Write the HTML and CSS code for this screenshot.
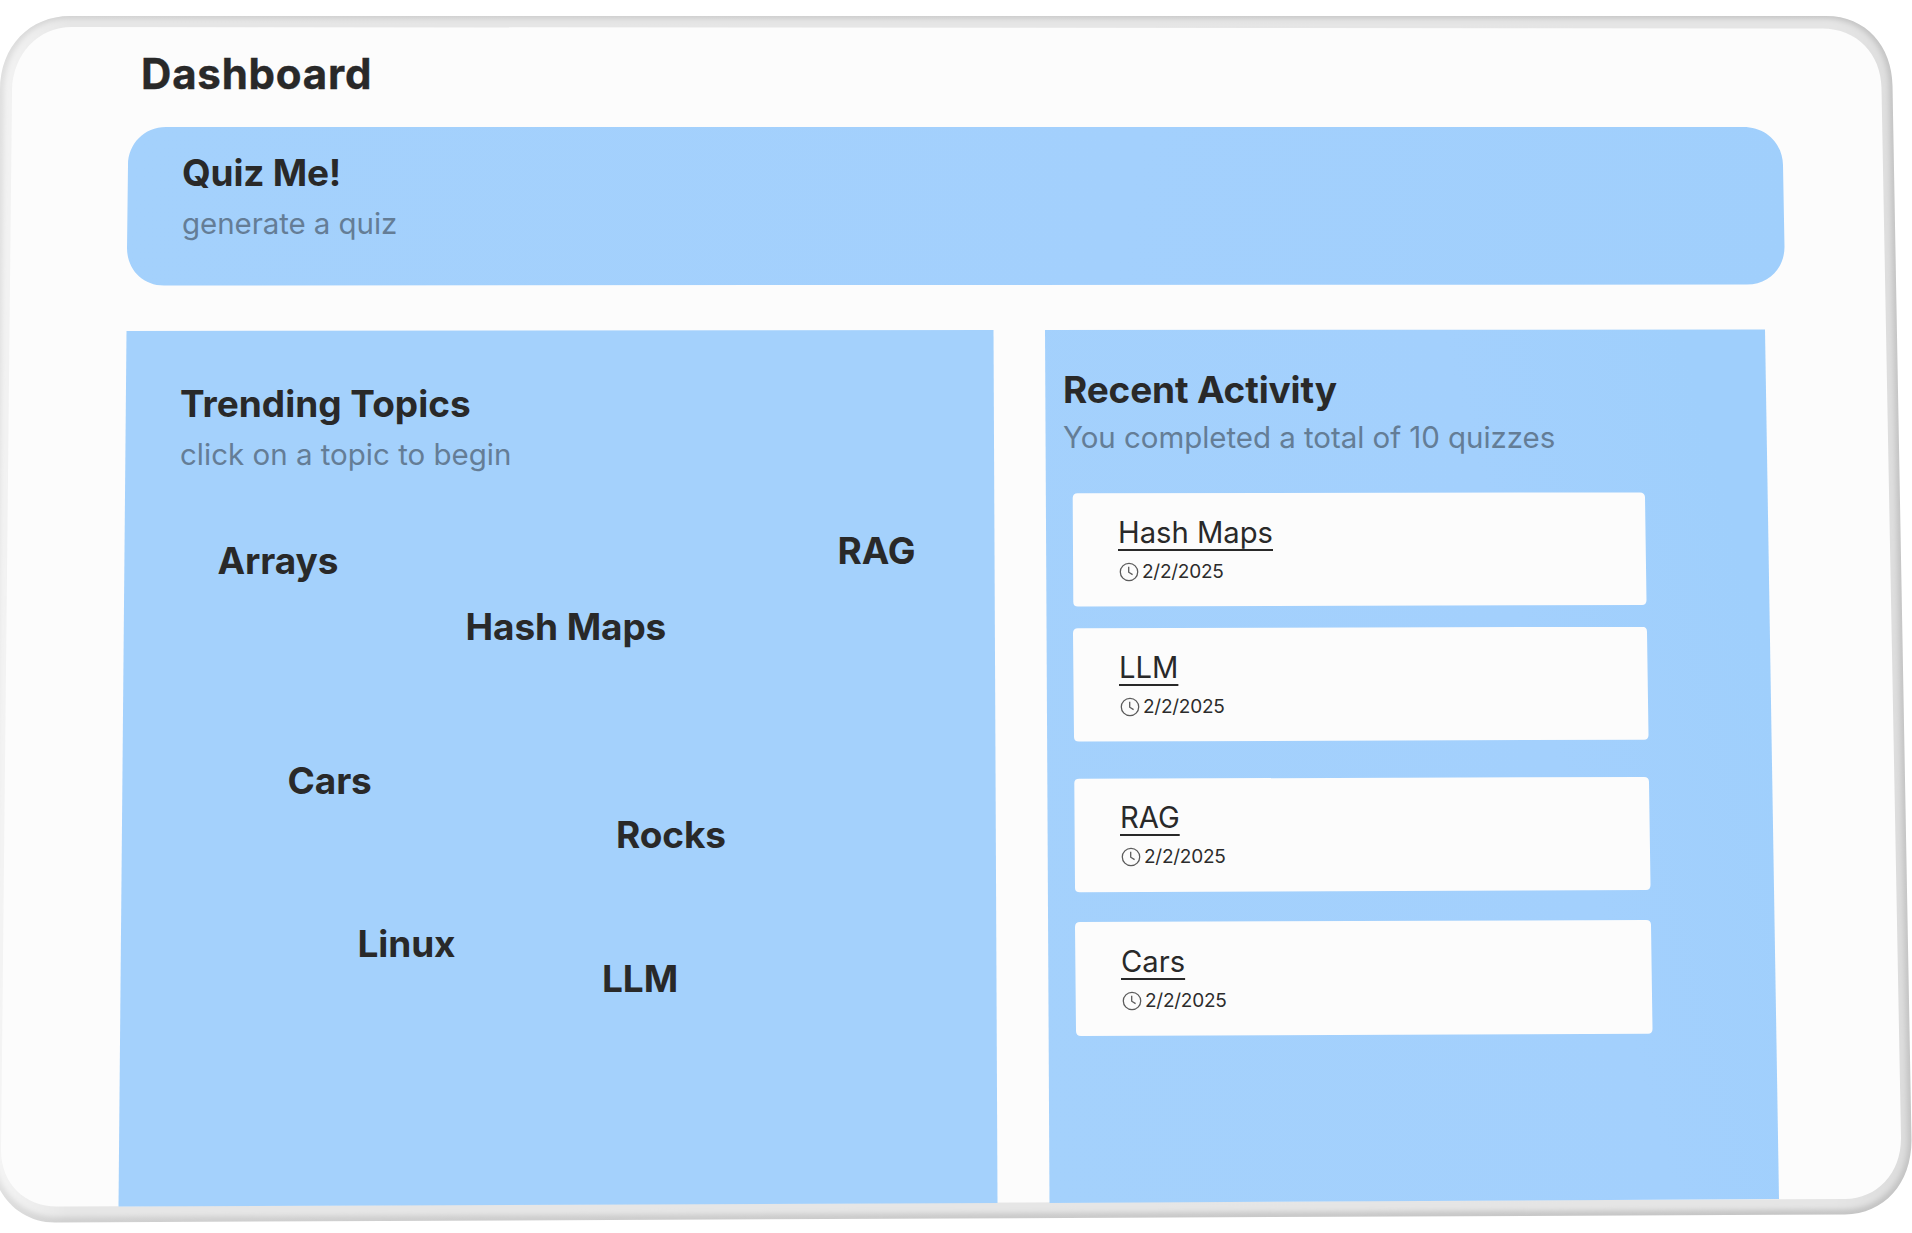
FILE: index.html
```html
<!DOCTYPE html>
<html lang="en">
<head>
<meta charset="utf-8">
<title>Dashboard</title>
<link rel="stylesheet" href="styles.css">
</head>
<body>
<svg class="device" viewBox="0 0 1912 1233" aria-hidden="true">
  <defs>
    <linearGradient id="rim" x1="0" x2="1" y1="0" y2="0">
      <stop offset="0" stop-color="#e2e2e2"/><stop offset=".04" stop-color="#d0d0d0"/><stop offset="1" stop-color="#c4c4c4"/>
    </linearGradient>
    <linearGradient id="bevel" x1="0" x2="1" y1="0" y2="0">
      <stop offset="0" stop-color="#f5f5f5"/><stop offset=".04" stop-color="#e6e6e6"/><stop offset=".96" stop-color="#e5e5e5"/><stop offset="1" stop-color="#dcdcdc"/>
    </linearGradient>
    <clipPath id="body"><path d="M70 16H1826C1866 16 1892 46 1892.500 86L1911.500 1140C1911.500 1184 1884 1214 1845 1214.500L55 1222.500C16 1222.500-10 1190-10 1150L0 90C0 46 30 16 70 16Z"/></clipPath>
    <filter id="soft" x="-2%" y="-2%" width="104%" height="104%"><feGaussianBlur stdDeviation="2.500"/></filter>
  </defs>
  <g clip-path="url(#body)">
    <rect x="-12" width="1926" height="1233" fill="url(#rim)"/>
    <path filter="url(#soft)" fill="url(#bevel)" d="M70 18.500H1824C1863 18.500 1888 47 1888.800 86L1907.800 1140C1907.500 1181 1881 1209 1845 1209.500L55 1217C19 1216-6 1187-6 1150L4 90C5 49 31 18.500 70 18.500Z"/>
  </g>
  <path fill="#fcfcfc" d="M72 27L1822 28.500C1857 28.500 1881 54 1881.500 88L1901 1138C1901 1174 1877 1198.500 1845 1199L57 1206.500C25 1206.500 1 1184 1 1150L12 90C13 54 38 27 72 27Z"/>
</svg>
<main class="screen">
  <h1 class="title">Dashboard</h1>
  <section class="quiz">
    <h2 class="heading">Quiz Me!</h2>
    <p class="hint">generate a quiz</p>
  </section>
  <div class="columns">
    <section class="trending">
      <h2 class="heading">Trending Topics</h2>
      <p class="hint">click on a topic to begin</p>
      <div class="cloud">
        <span class="topic arrays">Arrays</span>
        <span class="topic rag">RAG</span>
        <span class="topic maps">Hash Maps</span>
        <span class="topic cars">Cars</span>
        <span class="topic rocks">Rocks</span>
        <span class="topic linux">Linux</span>
        <span class="topic llm">LLM</span>
      </div>
    </section>
    <section class="recent">
      <h2 class="heading">Recent Activity</h2>
      <p class="hint">You completed a total of 10 quizzes</p>
      <div class="cards">
        <article class="card card-1"><a class="name">Hash Maps</a><div class="date"><svg class="clock" viewBox="0 0 20 20"><circle cx="10" cy="10" r="8.700"/><path d="M9.700 4.800V10.200L13.600 12.600"/></svg><time>2/2/2025</time></div></article>
        <article class="card card-2"><a class="name">LLM</a><div class="date"><svg class="clock" viewBox="0 0 20 20"><circle cx="10" cy="10" r="8.700"/><path d="M9.700 4.800V10.200L13.600 12.600"/></svg><time>2/2/2025</time></div></article>
        <article class="card card-3"><a class="name">RAG</a><div class="date"><svg class="clock" viewBox="0 0 20 20"><circle cx="10" cy="10" r="8.700"/><path d="M9.700 4.800V10.200L13.600 12.600"/></svg><time>2/2/2025</time></div></article>
        <article class="card card-4"><a class="name">Cars</a><div class="date"><svg class="clock" viewBox="0 0 20 20"><circle cx="10" cy="10" r="8.700"/><path d="M9.700 4.800V10.200L13.600 12.600"/></svg><time>2/2/2025</time></div></article>
      </div>
    </section>
  </div>
</main>
</body>
</html>
```
FILE: styles.css
```css
* { box-sizing: border-box; }
body {
  margin: 0;
  width: 1912px;
  height: 1233px;
  overflow: hidden;
  position: relative;
  background: #fff;
  color: #292929;
  font-family: Inter, "Liberation Sans", sans-serif;
}
h1, h2, p { margin: 0; white-space: nowrap; }
.device { position: absolute; inset: 0; width: 1912px; height: 1233px; }
.screen {
  position: relative;
  display: flex;
  flex-direction: column;
  padding: 50px 127px 0 118px;
}
.title { margin-left: 23px; font-size: 42px; line-height: 48px; font-weight: 700; letter-spacing: .8px; -webkit-text-stroke: .4px #292929; }
.heading { font-size: 37px; line-height: 44px; font-weight: 700; }
.hint { font-size: 29.5px; line-height: 36px; color: #647d96; }

.quiz {
  margin: 29px 0 0 9px;
  width: 1658px;
  height: 159px;
  padding: 24px 0 0 55px;
  background: linear-gradient(100deg, #a4d1fc, #a3d0fd 60%, #a0cffc);
  clip-path: path("M39 0H1616C1640 0 1655.500 17 1656 38L1657.500 120C1657.500 141 1642 157.500 1620 157.500L37 158.500C15 158.500 0 142 0 121L1 38C1 17 17 0 39 0Z");
}
.quiz .heading { letter-spacing: -.2px; }
.quiz .hint { margin-top: 10px; letter-spacing: -.07px; }

.columns { display: flex; gap: 47px; margin-top: 43px; }
.trending {
  width: 880px;
  height: 878px;
  padding: 53px 0 0 62px;
  background: #a4d1fc;
  clip-path: polygon(8.500px 2px, 875.500px 1px, 879.500px 874px, .5px 877.500px);
}
.trending .hint { margin-top: 10px; }
.cloud { position: relative; height: 560px; margin: 1px 0 0 -62px; }
.topic { position: absolute; font-size: 37px; line-height: 44px; font-weight: 700; letter-spacing: -.1px; white-space: nowrap; }
.arrays { left: 99.5px; top: 66px; }
.rag { left: 719.5px; top: 56px; }
.maps { left: 347.5px; top: 132px; }
.cars { left: 169.5px; top: 286px; }
.rocks { left: 498px; top: 340px; }
.linux { left: 239.5px; top: 449px; }
.llm { left: 484px; top: 484px; }

.recent {
  width: 734px;
  height: 878px;
  padding: 39px 0 0 18px;
  background: linear-gradient(75deg, #a4d1fc, #a3d0fd 65%, #9fcffc 90%);
  clip-path: polygon(0 1px, 720px .5px, 734px 870px, 4.500px 874px);
}
.recent .heading { letter-spacing: -.15px; }
.recent .hint { margin-top: 7px; letter-spacing: -.05px; }
.cards { display: flex; flex-direction: column; margin: 37px 0 0 9px; }
.card {
  width: 582px;
  height: 116px;
  padding: 23px 0 0 46px;
  background: #fcfcfc;
}
.card-1 { clip-path: path("M5.700 1.300L568 .4Q572.500 .4 573 5L574.500 108Q574.500 113 570 113L6 114.600Q1.300 114.600 1.300 110L.7 6Q.7 1.300 5.700 1.300Z"); }
.card-2 { margin-top: 19px; padding-left: 47px; clip-path: path("M6 1.300L570 -.3Q575 -.3 575 4.700L576.500 108Q576.500 112.700 572 112.700L7 114.500Q2 114.500 2 110L1 6Q1 1.300 6 1.300Z"); }
.card-3 { margin-top: 34px; padding-left: 48px; clip-path: path("M7.300 1.700L572 0Q577 0 577 4.700L578.500 108Q578.500 113 574 113L8 115.300Q3 115.300 3 111L2.300 6Q2.300 1.700 7.300 1.700Z"); }
.card-4 { margin-top: 27px; padding-left: 49px; padding-top: 24px; clip-path: path("M8 2L574 0Q579 0 579 4.700L580.500 109Q580.500 113.700 576 113.700L9 116Q4 116 4 111L3 7Q3 2 8 2Z"); }
.name {
  display: block;
  font-size: 29.2px;
  line-height: 36px;
  text-decoration: underline;
  text-decoration-thickness: 2px;
  text-underline-offset: 6px;
}
.date { display: flex; align-items: center; gap: 3px; margin: 9px 0 0 1px; font-size: 19px; line-height: 24px; letter-spacing: -.25px; color: #2c2c2c; }
.clock { width: 20px; height: 20px; fill: none; stroke: #5c5c5c; stroke-width: 1.300; }
```
